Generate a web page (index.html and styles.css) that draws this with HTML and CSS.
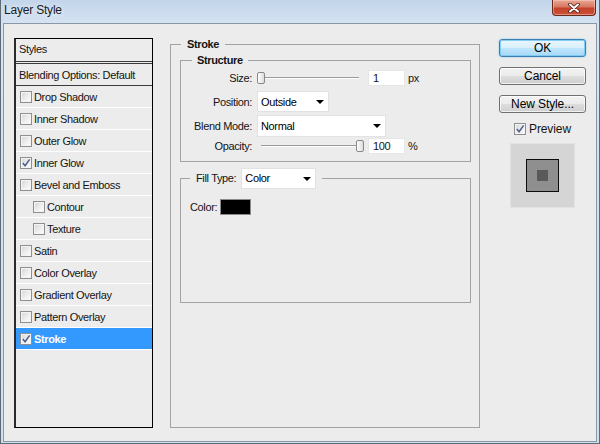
FILE: index.html
```html
<!DOCTYPE html>
<html>
<head>
<meta charset="utf-8">
<title>Layer Style</title>
<link rel="stylesheet" href="styles.css">
</head>
<body>
<div class="window">
  <div class="titlebar">
    <span class="title">Layer Style</span>
    <div class="close">
      <svg width="12" height="10" viewBox="0 0 12 10">
        <path d="M2 1.5 L10 8.5 M10 1.5 L2 8.5" stroke="#4a1d14" stroke-width="3.6" stroke-linecap="round" fill="none"/>
        <path d="M2 1.5 L10 8.5 M10 1.5 L2 8.5" stroke="#ffffff" stroke-width="2" stroke-linecap="round" fill="none"/>
      </svg>
    </div>
  </div>
  <div class="client">
    <div class="styles-panel">
      <div class="styles-head">Styles</div>
      <div class="blend-row">Blending Options: Default</div>
      <div class="row"><span class="cb"></span><span class="lbl">Drop Shadow</span></div>
      <div class="row"><span class="cb"></span><span class="lbl">Inner Shadow</span></div>
      <div class="row"><span class="cb"></span><span class="lbl">Outer Glow</span></div>
      <div class="row"><span class="cb"><svg class="tick" viewBox="0 0 11 11"><path d="M2 5.5 L4.5 8.5 L9.5 1.5" fill="none" stroke="#4b5d8f" stroke-width="1.6"/></svg></span><span class="lbl">Inner Glow</span></div>
      <div class="row"><span class="cb"></span><span class="lbl">Bevel and Emboss</span></div>
      <div class="row sub"><span class="cb"></span><span class="lbl">Contour</span></div>
      <div class="row sub"><span class="cb"></span><span class="lbl">Texture</span></div>
      <div class="row"><span class="cb"></span><span class="lbl">Satin</span></div>
      <div class="row"><span class="cb"></span><span class="lbl">Color Overlay</span></div>
      <div class="row"><span class="cb"></span><span class="lbl">Gradient Overlay</span></div>
      <div class="row"><span class="cb"></span><span class="lbl">Pattern Overlay</span></div>
      <div class="row selected"><span class="cb"><svg class="tick" viewBox="0 0 11 11"><path d="M2 5.5 L4.5 8.5 L9.5 1.5" fill="none" stroke="#4b5d8f" stroke-width="1.6"/></svg></span><span class="lbl">Stroke</span></div>
    </div>

    <fieldset class="group outer">
      <legend class="bold-legend">Stroke</legend>
      <fieldset class="group structure">
        <legend class="bold-legend">Structure</legend>
        <div class="fields">
          <div class="frow r-size">
            <span class="flabel">Size:</span>
            <div class="slider"><div class="track"></div><div class="thumb thumb-min"></div></div>
            <span class="num">1</span>
            <span class="unit">px</span>
          </div>
          <div class="frow r-pos">
            <span class="flabel">Position:</span>
            <span class="select sel-pos">Outside</span>
          </div>
          <div class="frow r-blend">
            <span class="flabel">Blend Mode:</span>
            <span class="select sel-blend">Normal</span>
          </div>
          <div class="frow r-opac">
            <span class="flabel">Opacity:</span>
            <div class="slider"><div class="track"></div><div class="thumb thumb-max"></div></div>
            <span class="num">100</span>
            <span class="unit">%</span>
          </div>
        </div>
      </fieldset>
      <fieldset class="group fill">
        <legend class="fill-legend"><span class="legend-inner"><span>Fill Type:</span><span class="select sel-fill">Color</span></span></legend>
        <div class="color-row"><span>Color:</span><span class="swatch"></span></div>
      </fieldset>
    </fieldset>

    <div class="actions">
      <div class="btn btn-default">OK</div>
      <div class="btn">Cancel</div>
      <div class="btn">New Style...</div>
      <div class="preview-check">
        <span class="cb cb-small"><svg class="tick" viewBox="0 0 11 11"><path d="M2 5.5 L4.5 8.5 L9.5 1.5" fill="none" stroke="#4b5d8f" stroke-width="1.6"/></svg></span>
        <span>Preview</span>
      </div>
      <div class="preview-box">
        <div class="preview-outer"><div class="preview-inner"></div></div>
      </div>
    </div>
  </div>
</div>
</body>
</html>
```

FILE: styles.css
```css
* { box-sizing: border-box; }
html, body { margin: 0; padding: 0; }
body {
  width: 600px;
  height: 444px;
  overflow: hidden;
  background: #cddcec;
  font-family: "Liberation Sans", Arial, sans-serif;
  font-size: 11px;
  color: #141414;
}

.window {
  width: 600px;
  height: 444px;
  display: flex;
  flex-direction: column;
  background: linear-gradient(#c2d5ea 0px, #d4e2f1 22px, #d0dfee 100%);
  border-left: 1px solid #5d6b78;
  border-right: 1px solid #5d6b78;
  border-bottom: 1px solid #5d6b78;
  padding: 0 2px 1px 2px;
}

.titlebar {
  height: 23px;
  flex: none;
  display: flex;
  justify-content: space-between;
  align-items: flex-start;
}
.title {
  padding: 3px 0 0 1px;
  font-size: 12px;
  line-height: 14px;
  letter-spacing: -0.2px;
  color: #1b1b1b;
  text-shadow: 0 0 6px rgba(255,255,255,0.9);
}
.close {
  width: 44px;
  height: 16px;
  margin-right: 1px;
  border: 1px solid #6a2a1d;
  border-top: none;
  border-radius: 0 0 4px 4px;
  background: linear-gradient(#e8a795 0%, #d9785f 45%, #c3412a 55%, #cc5236 100%);
  box-shadow: inset 0 0 0 1px rgba(255,220,210,0.45);
  display: flex;
  align-items: center;
  justify-content: center;
}

.client {
  flex: 1;
  display: flex;
  align-items: flex-start;
  background: #ececec;
  border: 1px solid #8a98a6;
  padding: 14px 0 0 10px;
  letter-spacing: -0.35px;
}

/* left styles list */
.styles-panel {
  width: 139px;
  height: 390px;
  flex: none;
  border: 1px solid #000;
  border-left-width: 2px;
  border-left-color: #2a2a2a;
  background: #ececec;
}
.styles-head {
  height: 25px;
  padding: 0 0 2px 3px;
  display: flex;
  align-items: center;
  border-bottom: 3px double #3a3a3a;
}
.blend-row {
  height: 22px;
  padding-left: 3px;
  display: flex;
  align-items: center;
  border-bottom: 1px solid #3a3a3a;
}
.row {
  height: 22px;
  display: flex;
  align-items: center;
  padding-left: 4px;
  border-bottom: 1px solid #ffffff;
}
.row.sub { padding-left: 17px; }
.row .lbl { margin-left: 2px; }
.row.selected {
  background: #3399ff;
  color: #ffffff;
  font-weight: bold;
}

.cb {
  width: 12px;
  height: 12px;
  flex: none;
  border: 1px solid #8e8f8f;
  background: linear-gradient(135deg, #d6d6d6 0%, #f0f0f0 60%, #fdfdfd 100%);
  box-shadow: inset 0 0 0 1px #f4f4f4;
  display: flex;
  align-items: center;
  justify-content: center;
}
.tick { width: 10px; height: 10px; display: block; }

/* group boxes */
fieldset.group {
  margin: 0;
  padding: 0;
  min-width: 0;
  border: 1px solid #a3a3a3;
}
legend {
  line-height: 12px;
  padding: 0 6px;
}
.bold-legend { font-weight: bold; }

fieldset.outer {
  width: 310px;
  height: 390px;
  margin-left: 17px;
  padding: 0 8px 0 9px;
  flex: none;
}
fieldset.outer > legend { margin-left: 1px; }

fieldset.structure {
  margin-top: 4px;
  padding: 0 0 7px 0;
}
fieldset.structure > legend { margin-left: 11px; padding: 0 5px; }

.fields { padding-top: 4px; }
.frow {
  display: flex;
  align-items: center;
}
.r-size { height: 16px; }
.r-pos { height: 21px; margin-top: 5px; }
.r-blend { height: 22px; margin-top: 3px; }
.r-opac { height: 16px; margin-top: 1px; }

.flabel {
  width: 71px;
  margin-right: 5px;
  text-align: right;
  flex: none;
}

.slider {
  position: relative;
  width: 107px;
  height: 16px;
  flex: none;
  display: flex;
  align-items: center;
  padding: 0 5px 0 4px;
}
.track {
  width: 100%;
  height: 2px;
  border-top: 1px solid #9b9b9b;
  border-bottom: 1px solid #ffffff;
}
.thumb {
  position: absolute;
  top: 2px;
  width: 8px;
  height: 12px;
  border: 1px solid #888;
  border-radius: 2px;
  background: linear-gradient(90deg, #ffffff, #dcdcdc);
}
.thumb-min { left: 0; }
.thumb-max { left: 99px; }

.num {
  width: 37px;
  height: 16px;
  margin-left: 4px;
  padding-left: 4px;
  background: #fff;
  border: 1px solid #e6e6e6;
  display: flex;
  align-items: center;
  flex: none;
}
.unit { margin-left: 3px; }

.select {
  display: flex;
  align-items: center;
  justify-content: space-between;
  background: #fff;
  border: 1px solid #e2e2e2;
  padding: 0 4px 0 3px;
  flex: none;
  color: #000;
}
.select::after {
  content: "";
  border-left: 4px solid transparent;
  border-right: 4px solid transparent;
  border-top: 4px solid #000;
}
.sel-pos { width: 72px; height: 21px; }
.sel-blend { width: 129px; height: 22px; }
.sel-fill { width: 75px; height: 21px; }

fieldset.fill {
  margin-top: 6px;
  height: 135px;
  padding: 0 0 0 9px;
}
.fill-legend {
  margin-left: 0;
  padding: 0 6px;
  line-height: 21px;
}
.legend-inner {
  display: flex;
  align-items: center;
  gap: 5px;
}
.color-row {
  display: flex;
  align-items: center;
  gap: 3px;
  padding-top: 10px;
}
.swatch {
  width: 31px;
  height: 16px;
  background: #000;
  border: 1px solid #8a8a8a;
}

/* right column */
.actions {
  width: 87px;
  margin-left: 19px;
  margin-top: 1px;
  display: flex;
  flex-direction: column;
  font-size: 12px;
  letter-spacing: -0.1px;
}
.btn {
  height: 18px;
  margin-bottom: 10px;
  border: 1px solid #707070;
  border-radius: 3px;
  background: linear-gradient(#f3f3f3 0%, #ebebeb 48%, #dddddd 52%, #cfcfcf 100%);
  box-shadow: inset 0 0 0 1px rgba(255,255,255,0.7);
  display: flex;
  align-items: center;
  justify-content: center;
  color: #000;
}
.btn-default {
  border-color: #3c7fb1;
  background: linear-gradient(#eaf6fd 0%, #d9f0fc 48%, #bee6fd 52%, #a7d9f5 100%);
  box-shadow: inset 0 0 0 1px rgba(120,200,245,0.9), 0 0 2px #7ec8f0;
}
.preview-check {
  margin-top: -1px;
  display: flex;
  align-items: center;
  justify-content: center;
  gap: 3px;
  height: 14px;
}
.preview-box {
  align-self: center;
  margin-top: 7px;
  width: 65px;
  height: 65px;
  background: #d5d5d5;
  border: 1px solid #e2e2e2;
  display: flex;
  align-items: center;
  justify-content: center;
  margin-left: -1px;
}
.preview-outer {
  width: 33px;
  height: 33px;
  background: #8f8f8f;
  border: 1px solid #0c0c0c;
  display: flex;
  align-items: center;
  justify-content: center;
}
.preview-inner {
  width: 11px;
  height: 11px;
  background: #5a5a5a;
}
```
